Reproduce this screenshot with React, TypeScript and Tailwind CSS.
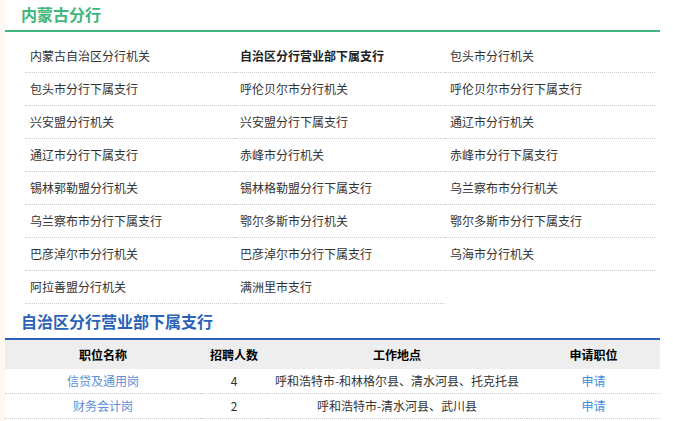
import React from "react";

const items: { t: string; b?: boolean }[] = [
  { t: "内蒙古自治区分行机关" },
  { t: "自治区分行营业部下属支行", b: true },
  { t: "包头市分行机关" },
  { t: "包头市分行下属支行" },
  { t: "呼伦贝尔市分行机关" },
  { t: "呼伦贝尔市分行下属支行" },
  { t: "兴安盟分行机关" },
  { t: "兴安盟分行下属支行" },
  { t: "通辽市分行机关" },
  { t: "通辽市分行下属支行" },
  { t: "赤峰市分行机关" },
  { t: "赤峰市分行下属支行" },
  { t: "锡林郭勒盟分行机关" },
  { t: "锡林格勒盟分行下属支行" },
  { t: "乌兰察布市分行机关" },
  { t: "乌兰察布市分行下属支行" },
  { t: "鄂尔多斯市分行机关" },
  { t: "鄂尔多斯市分行下属支行" },
  { t: "巴彦淖尔市分行机关" },
  { t: "巴彦淖尔市分行下属支行" },
  { t: "乌海市分行机关" },
  { t: "阿拉善盟分行机关" },
  { t: "满洲里市支行" },
];

const rows = [
  { name: "信贷及通用岗", num: "4", place: "呼和浩特市-和林格尔县、清水河县、托克托县" },
  { name: "财务会计岗", num: "2", place: "呼和浩特市-清水河县、武川县" },
];

export default function App() {
  return (
    <div
      className="flex w-[673px] h-[421px] overflow-hidden bg-white text-[#333]"
      style={{ fontFamily: '"Noto Sans CJK SC", "Noto Sans", sans-serif' }}
    >
      <div className="w-[5px] shrink-0 bg-[#fdf8f2]" />
      <div className="w-[655px] shrink-0">
        <div className="h-[30px] pl-[16px] text-[16px] font-bold leading-[28px] text-[#3fb67b]">
          内蒙古分行
        </div>
        <div className="h-[2px] bg-[#3fb67b]" />
        <div className="mt-[8px] ml-[20px] grid w-[630px] grid-cols-3">
          {items.map((it, i) => (
            <div
              key={i}
              className={`flex h-[33px] items-center border-b border-dotted border-[#ccc] pl-[5px] text-[12px] ${
                it.b ? "font-bold text-[#222]" : ""
              }`}
            >
              {it.t}
            </div>
          ))}
        </div>
        <div className="h-[34px] pl-[16px] text-[16px] font-bold leading-[34px] text-[#2a62b8]">
          自治区分行营业部下属支行
        </div>
        <div className="h-[2px] bg-[#2a62b8]" />
        <div className="grid grid-cols-[196px_66px_260px_133px] text-[12px]">
          <div className="flex h-[29px] items-center justify-center bg-[#eeeeee] font-bold text-black">职位名称</div>
          <div className="flex h-[29px] items-center justify-center bg-[#eeeeee] font-bold text-black">招聘人数</div>
          <div className="flex h-[29px] items-center justify-center bg-[#eeeeee] font-bold text-black">工作地点</div>
          <div className="flex h-[29px] items-center justify-center bg-[#eeeeee] font-bold text-black">申请职位</div>
          {rows.map((r, i) => (
            <React.Fragment key={i}>
              <div className="flex h-[25px] items-center justify-center border-b border-dotted border-[#ccc] text-[#5b8fd8]">{r.name}</div>
              <div className="flex h-[25px] items-center justify-center border-b border-dotted border-[#ccc]">{r.num}</div>
              <div className="flex h-[25px] items-center justify-center border-b border-dotted border-[#ccc] whitespace-nowrap">{r.place}</div>
              <div className="flex h-[25px] items-center justify-center border-b border-dotted border-[#ccc] text-[#3e8de0]">申请</div>
            </React.Fragment>
          ))}
        </div>
      </div>
    </div>
  );
}
